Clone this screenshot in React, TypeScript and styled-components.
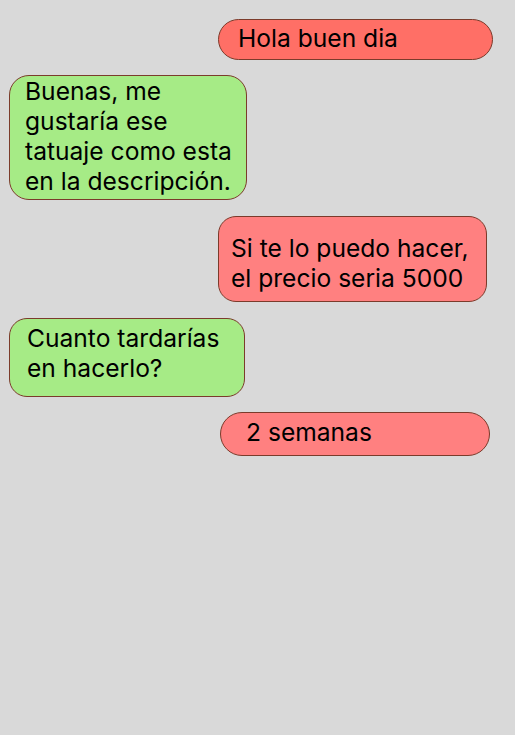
import React from "react";
import styled, { createGlobalStyle, css } from "styled-components";

const Global = createGlobalStyle`
  html, body { margin: 0; padding: 0; background: #d9d9d9; }
  body { font-family: Inter, "Noto Sans", sans-serif; }
`;

const Screen = styled.main`
  width: 515px;
  height: 735px;
  background: #d9d9d9;
  box-sizing: border-box;
  padding-top: 19px;
  display: flex;
  flex-direction: column;
`;

type Tone = "hot" | "soft" | "green";

const tones: Record<Tone, string> = {
  hot: "#ff6f66",
  soft: "#ff8080",
  green: "#a6eb86",
};

interface BubbleProps {
  $tone: Tone;
  $side: "left" | "right";
  $w: number;
  $edge: number;
  $mt: number;
  $pt: number;
  $pb: number;
  $pl: number;
  $r: number;
}

const Bubble = styled.div<BubbleProps>`
  box-sizing: border-box;
  width: ${(p) => p.$w}px;
  margin-top: ${(p) => p.$mt}px;
  padding: ${(p) => p.$pt}px 0 ${(p) => p.$pb}px ${(p) => p.$pl}px;
  background: ${(p) => tones[p.$tone]};
  border: 1px solid #7b3b2b;
  border-radius: ${(p) => p.$r}px;
  color: #000;
  font-size: 24.6px;
  line-height: 30px;
  white-space: nowrap;
  ${(p) =>
    p.$side === "right"
      ? css`
          align-self: flex-end;
          margin-right: ${p.$edge}px;
        `
      : css`
          align-self: flex-start;
          margin-left: ${p.$edge}px;
        `}
`;

export default function App() {
  return (
    <>
      <Global />
      <Screen>
        <Bubble $tone="hot" $side="right" $w={275} $edge={22} $mt={0} $pt={3} $pb={6} $pl={19} $r={21}>
          Hola buen dia
        </Bubble>
        <Bubble $tone="green" $side="left" $w={238} $edge={9} $mt={15} $pt={0} $pb={3} $pl={15} $r={20}>
          Buenas, me
          <br />
          gustaría ese
          <br />
          tatuaje como esta
          <br />
          en la descripción.
        </Bubble>
        <Bubble $tone="soft" $side="right" $w={269} $edge={28} $mt={16} $pt={16} $pb={8} $pl={12} $r={18}>
          Si te lo puedo hacer,
          <br />
          el precio seria 5000
        </Bubble>
        <Bubble $tone="green" $side="left" $w={236} $edge={9} $mt={16} $pt={4} $pb={13} $pl={17} $r={18}>
          Cuanto tardarías
          <br />
          en hacerlo?
        </Bubble>
        <Bubble $tone="soft" $side="right" $w={270} $edge={25} $mt={15} $pt={4} $pb={8} $pl={25} $r={22}>
          2 semanas
        </Bubble>
      </Screen>
    </>
  );
}
